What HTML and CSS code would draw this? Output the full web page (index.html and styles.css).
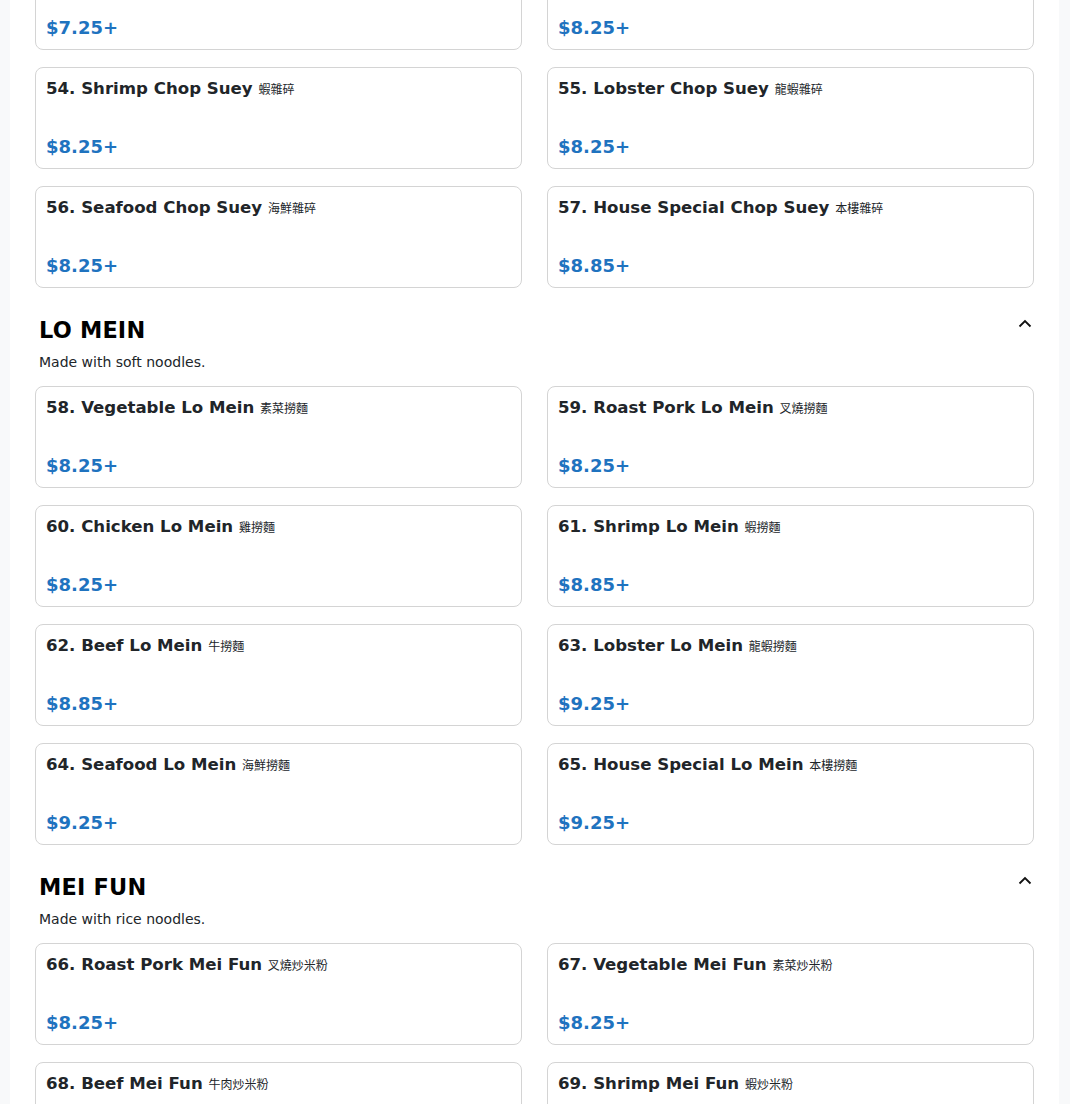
FILE: index.html
```html
<!DOCTYPE html>
<html lang="en">
<head>
<meta charset="utf-8">
<title>Menu</title>
<link rel="stylesheet" href="styles.css">
</head>
<body>
<main class="page">
  <section class="section section-first">
    <div class="grid">
      <div class="card"><div class="title">52. Chicken Chop Suey <span class="zh">雞雜碎</span></div><div class="price">$7.25+</div></div>
      <div class="card"><div class="title">53. Beef Chop Suey <span class="zh">牛雜碎</span></div><div class="price">$8.25+</div></div>
      <div class="card"><div class="title">54. Shrimp Chop Suey <span class="zh">蝦雜碎</span></div><div class="price">$8.25+</div></div>
      <div class="card"><div class="title">55. Lobster Chop Suey <span class="zh">龍蝦雜碎</span></div><div class="price">$8.25+</div></div>
      <div class="card"><div class="title">56. Seafood Chop Suey <span class="zh">海鮮雜碎</span></div><div class="price">$8.25+</div></div>
      <div class="card"><div class="title">57. House Special Chop Suey <span class="zh">本樓雜碎</span></div><div class="price">$8.85+</div></div>
    </div>
  </section>

  <section class="section">
    <div class="head">
      <h2 class="heading">LO MEIN</h2>
      <svg class="chev" width="14" height="9" viewBox="0 0 14 9"><polyline points="1.5,7.5 7,2 12.5,7.5" fill="none" stroke="#111" stroke-width="1.8"/></svg>
    </div>
    <p class="desc">Made with soft noodles.</p>
    <div class="grid">
      <div class="card"><div class="title">58. Vegetable Lo Mein <span class="zh">素菜撈麵</span></div><div class="price">$8.25+</div></div>
      <div class="card"><div class="title">59. Roast Pork Lo Mein <span class="zh">叉燒撈麵</span></div><div class="price">$8.25+</div></div>
      <div class="card"><div class="title">60. Chicken Lo Mein <span class="zh">雞撈麵</span></div><div class="price">$8.25+</div></div>
      <div class="card"><div class="title">61. Shrimp Lo Mein <span class="zh">蝦撈麵</span></div><div class="price">$8.85+</div></div>
      <div class="card"><div class="title">62. Beef Lo Mein <span class="zh">牛撈麵</span></div><div class="price">$8.85+</div></div>
      <div class="card"><div class="title">63. Lobster Lo Mein <span class="zh">龍蝦撈麵</span></div><div class="price">$9.25+</div></div>
      <div class="card"><div class="title">64. Seafood Lo Mein <span class="zh">海鮮撈麵</span></div><div class="price">$9.25+</div></div>
      <div class="card"><div class="title">65. House Special Lo Mein <span class="zh">本樓撈麵</span></div><div class="price">$9.25+</div></div>
    </div>
  </section>

  <section class="section">
    <div class="head">
      <h2 class="heading">MEI FUN</h2>
      <svg class="chev" width="14" height="9" viewBox="0 0 14 9"><polyline points="1.5,7.5 7,2 12.5,7.5" fill="none" stroke="#111" stroke-width="1.8"/></svg>
    </div>
    <p class="desc">Made with rice noodles.</p>
    <div class="grid">
      <div class="card"><div class="title">66. Roast Pork Mei Fun <span class="zh">叉燒炒米粉</span></div><div class="price">$8.25+</div></div>
      <div class="card"><div class="title">67. Vegetable Mei Fun <span class="zh">素菜炒米粉</span></div><div class="price">$8.25+</div></div>
      <div class="card"><div class="title">68. Beef Mei Fun <span class="zh">牛肉炒米粉</span></div><div class="price">$8.85+</div></div>
      <div class="card"><div class="title">69. Shrimp Mei Fun <span class="zh">蝦炒米粉</span></div><div class="price">$8.85+</div></div>
    </div>
  </section>
</main>
</body>
</html>
```

FILE: styles.css
```css
html, body {
  margin: 0;
  padding: 0;
}
body {
  background: #f8f9fa;
  font-family: "DejaVu Sans", "Noto Sans CJK TC", sans-serif;
  color: #212529;
  overflow: hidden;
}
.page {
  width: 1049px;
  margin: -52px 0 0 10px;
  background: #fff;
  padding: 0 25px 40px 25px;
  box-sizing: border-box;
  min-height: 1300px;
}
.section {
  padding-top: 29px;
}
.section-first {
  padding-top: 0;
}
.head {
  display: flex;
  justify-content: space-between;
  align-items: flex-start;
  padding: 0 2px 0 4px;
}
.heading {
  margin: 0;
  font-size: 22.4px;
  line-height: 27px;
  font-weight: bold;
  color: #000;
  letter-spacing: 0.2px;
}
.chev {
  display: block;
  margin-top: 2px;
}
.desc {
  margin: 8px 0 0 0;
  padding-left: 4px;
  font-size: 14px;
  line-height: 21px;
  color: #212529;
}
.section .desc + .grid {
  margin-top: 13px;
}
.grid {
  display: grid;
  grid-template-columns: 1fr 1fr;
  column-gap: 25px;
  row-gap: 17px;
}
.card {
  height: 102px;
  box-sizing: border-box;
  border: 1px solid #d4d4d4;
  border-radius: 8px;
  padding: 10px;
  display: flex;
  flex-direction: column;
  justify-content: space-between;
}
.title {
  font-size: 16.6px;
  line-height: 21px;
  font-weight: bold;
  color: #212529;
}
.zh {
  font-family: "Noto Sans CJK TC", sans-serif;
  font-weight: normal;
  font-size: 12px;
}
.price {
  font-size: 18px;
  line-height: 23px;
  font-weight: bold;
  color: #1f73bf;
}
```
